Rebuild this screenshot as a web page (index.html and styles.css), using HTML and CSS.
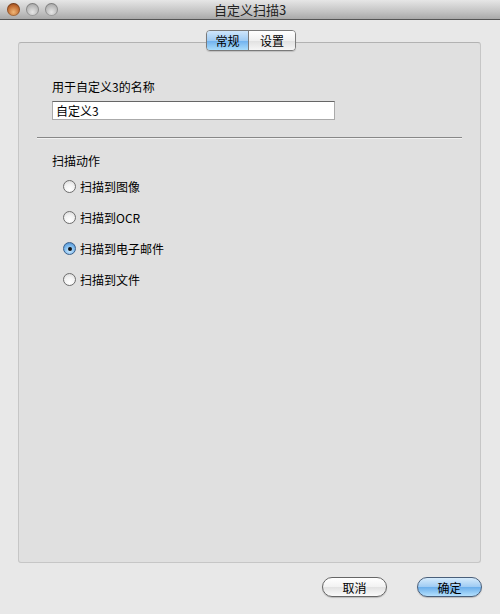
FILE: index.html
```html
<!DOCTYPE html>
<html>
<head>
<meta charset="utf-8">
<link rel="stylesheet" href="styles.css">
</head>
<body>
<div class="window">
  <div class="titlebar">
    <div class="lights">
      <span class="light close"></span>
      <span class="light"></span>
      <span class="light"></span>
    </div>
    <div class="title">自定义扫描3</div>
  </div>
  <div class="content">
    <div class="tabbox">
      <div class="tabs">
        <span class="tab selected">常规</span><span class="tab">设置</span>
      </div>
      <div class="panel">
        <div class="label">用于自定义3的名称</div>
        <div class="input">自定义3</div>
        <div class="sep"></div>
        <div class="label2">扫描动作</div>
        <div class="radios">
          <div class="radio"><span class="dot"></span>扫描到图像</div>
          <div class="radio"><span class="dot"></span>扫描到OCR</div>
          <div class="radio"><span class="dot on"></span>扫描到电子邮件</div>
          <div class="radio"><span class="dot"></span>扫描到文件</div>
        </div>
      </div>
    </div>
    <div class="buttons">
      <span class="btn">取消</span>
      <span class="btn default">确定</span>
    </div>
  </div>
</div>
</body>
</html>
```
FILE: styles.css
```css
html, body { margin: 0; padding: 0; }
body {
  width: 500px; height: 614px; overflow: hidden;
  font-family: "Noto Sans CJK SC", "Liberation Sans", sans-serif;
  font-size: 12px; color: #000;
  background: #e8e8e8;
}
.window { width: 500px; height: 614px; display: flex; flex-direction: column; }
.titlebar {
  height: 19px; border-bottom: 1px solid #555;
  background: linear-gradient(#e6e6e6, #c4c4c4 60%, #a9a9a9);
  display: flex; align-items: center; position: relative;
}
.lights { display: flex; gap: 6px; padding-left: 7px; }
.light {
  width: 13px; height: 13px; border-radius: 50%;
  background: radial-gradient(circle at 50% 70%, #e6e6e6, #b5b5b5 60%, #999);
  box-shadow: inset 0 0 0 1px rgba(0,0,0,0.25);
}
.light.close { background: radial-gradient(circle at 50% 70%, #f0b878, #c06a30 55%, #7a3410); }
.title {
  position: absolute; left: 0; right: 0; text-align: center;
  font-size: 13px; line-height: 19px; color: #222;
}
.content { flex: 1; display: flex; flex-direction: column; padding: 10px 18px 0 18px; }
.tabbox { position: relative; height: 535px; }
.tabs {
  position: absolute; top: 0; left: 188px; z-index: 2;
  display: flex; height: 19px;
  border: 1px solid #7a7a7a; border-radius: 4px; overflow: hidden;
  box-shadow: 0 1px 1px rgba(0,0,0,0.15);
}
.tab {
  display: flex; align-items: center; justify-content: center;
  height: 19px; font-size: 12px;
  background: linear-gradient(#ffffff, #f0f0f0 50%, #e0e0e0 51%, #f6f6f6);
}
.tab:first-child { width: 41px; border-right: 1px solid #7a7a7a; }
.tab:last-child { width: 46px; }
.tab.selected { background: linear-gradient(#cfe6fb, #9fcbf3 50%, #6eb0ee 51%, #a9dcfb); }
.panel {
  position: absolute; top: 12px; left: 0; width: 463px; height: 521px;
  border: 1px solid #c6c6c6; border-top-color: #b2b2b2; border-radius: 3px;
  background: #e0e0e0; box-sizing: border-box;
  padding: 35px 0 0 33px;
}
.label { height: 18px; line-height: 18px; }
.input {
  margin-top: 5px; width: 283px; height: 19px; box-sizing: border-box;
  background: #fff; border: 1px solid #aaa; border-top-color: #666;
  line-height: 17px; padding-left: 3px;
}
.sep { margin: 17px 0 0 -15px; width: 425px; height: 1px; background: #888; border-bottom: 1px solid #f2f2f2; }
.label2 { margin-top: 13px; height: 18px; line-height: 18px; }
.radios { padding-left: 11px; display: flex; flex-direction: column; gap: 12px; margin-top: 7px; }
.radio { display: flex; align-items: center; height: 19px; gap: 4px; }
.dot {
  width: 13px; height: 13px; border-radius: 50%; box-sizing: border-box;
  border: 1px solid #6d6d6d;
  background: radial-gradient(circle at 50% 75%, #ffffff, #f2f2f2 50%, #d4d4d4);
  display: flex; align-items: center; justify-content: center;
}
.dot.on { border-color: #3a5f8a; background: radial-gradient(circle at 50% 70%, #cfeaff, #7bb8ec 55%, #3f7fc4); }
.dot.on::after { content: ""; width: 4px; height: 4px; border-radius: 50%; background: #111; }
.buttons { display: flex; justify-content: flex-end; gap: 30px; margin-top: 12px; }
.btn {
  width: 65px; height: 20px; box-sizing: border-box;
  border: 1px solid #666; border-radius: 10px;
  display: flex; align-items: center; justify-content: center;
  background: linear-gradient(#ffffff, #f2f2f2 50%, #e2e2e2 51%, #fafafa);
  box-shadow: 0 1px 1px rgba(0,0,0,0.2);
}
.btn.default { background: linear-gradient(#d6ebfc, #9ecbf3 50%, #6aaeeb 51%, #b4e0fd); border-color: #4a5f7a; }
```
